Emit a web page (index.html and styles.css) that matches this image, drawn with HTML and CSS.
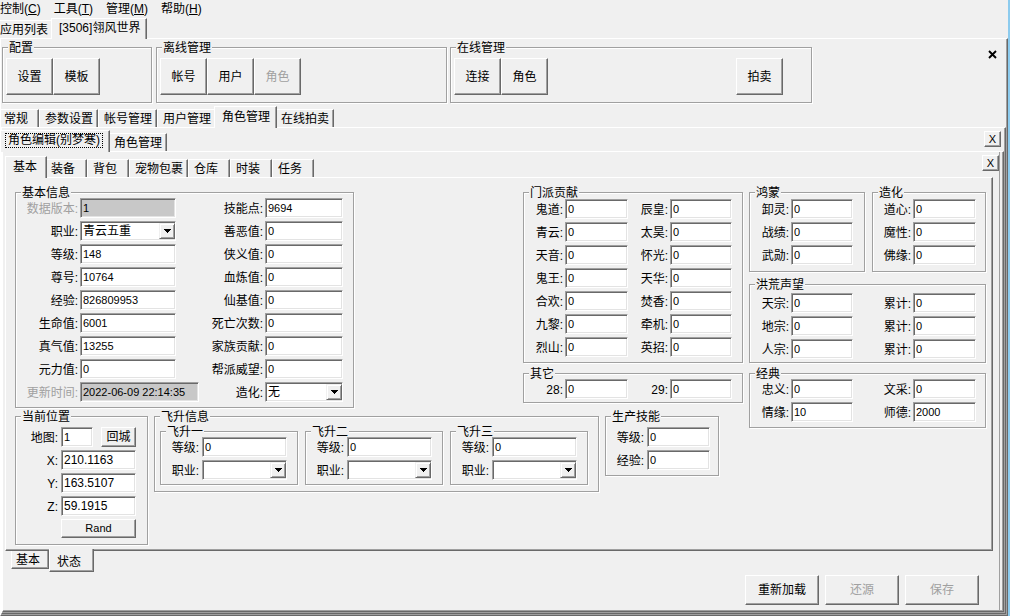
FILE: index.html
```html
<!DOCTYPE html>
<html lang="zh-CN">

<head>
    <meta charset="UTF-8">
    <title>角色编辑</title>
    <link rel="stylesheet" href="styles.css">
</head>

<body>
    <div class="app">
        <div class="menubar">
            <span class="mi">控制(<u>C</u>)</span>
            <span class="mi">工具(<u>T</u>)</span>
            <span class="mi">管理(<u>M</u>)</span>
            <span class="mi">帮助(<u>H</u>)</span>
        </div>

        <div class="tabs tabs-top">
            <div class="tab">应用列表</div>
            <div class="tab on">[3506]翎风世界</div>
        </div>

        <div class="pane pane-1">
            <div class="toolbar">
                <div class="grp tb-cfg">
                    <div class="gt">配置</div>
                    <div class="tb-btns">
                        <button class="btn big">设置</button>
                        <button class="btn big">模板</button>
                    </div>
                </div>
                <div class="grp tb-off">
                    <div class="gt">离线管理</div>
                    <div class="tb-btns">
                        <button class="btn big">帐号</button>
                        <button class="btn big">用户</button>
                        <button class="btn big" disabled>角色</button>
                    </div>
                </div>
                <div class="grp tb-on">
                    <div class="gt">在线管理</div>
                    <div class="tb-btns">
                        <button class="btn big">连接</button>
                        <button class="btn big">角色</button>
                        <button class="btn big auction">拍卖</button>
                    </div>
                </div>
                <span class="close-x">
                    <svg width="9" height="9" viewBox="0 0 9 9"><path d="M1 1L8 8M8 1L1 8" stroke="#000" stroke-width="1.9"/></svg>
                </span>
            </div>

            <div class="tabs tabs-2">
                <div class="tab">常规</div>
                <div class="tab">参数设置</div>
                <div class="tab">帐号管理</div>
                <div class="tab">用户管理</div>
                <div class="tab on">角色管理</div>
                <div class="tab">在线拍卖</div>
            </div>

            <div class="pane pane-2">
                <div class="strip strip-3">
                    <div class="tabs">
                        <div class="tab on"><span class="focus">角色编辑(别梦寒)</span></div>
                        <div class="tab">角色管理</div>
                    </div>
                    <button class="xbtn">X</button>
                </div>

                <div class="pane pane-3">
                    <div class="strip strip-4">
                        <div class="tabs">
                            <div class="tab on">基本</div>
                            <div class="tab">装备</div>
                            <div class="tab">背包</div>
                            <div class="tab">宠物包裹</div>
                            <div class="tab">仓库</div>
                            <div class="tab">时装</div>
                            <div class="tab">任务</div>
                        </div>
                        <button class="xbtn">X</button>
                    </div>

                    <div class="pane pane-4">
                        <div class="row1">
                            <div class="grp g-basic">
                                <div class="gt">基本信息</div>
                                <div class="form f-basic">
                                    <span class="lb dis">数据版本:</span><input class="ed" value="1" disabled>
                                    <span class="lb">技能点:</span><input class="ed" value="9694">

                                    <span class="lb">职业:</span>
                                    <div class="cb"><span>青云五重</span><i class="cb-btn"><svg width="7" height="4" viewBox="0 0 7 4"><path d="M0 0H7V1H6V2H5V3H4V4H3V3H2V2H1V1H0Z"/></svg></i></div>
                                    <span class="lb">善恶值:</span><input class="ed" value="0">

                                    <span class="lb">等级:</span><input class="ed" value="148">
                                    <span class="lb">侠义值:</span><input class="ed" value="0">

                                    <span class="lb">尊号:</span><input class="ed" value="10764">
                                    <span class="lb">血炼值:</span><input class="ed" value="0">

                                    <span class="lb">经验:</span><input class="ed" value="826809953">
                                    <span class="lb">仙基值:</span><input class="ed" value="0">

                                    <span class="lb">生命值:</span><input class="ed" value="6001">
                                    <span class="lb">死亡次数:</span><input class="ed" value="0">

                                    <span class="lb">真气值:</span><input class="ed" value="13255">
                                    <span class="lb">家族贡献:</span><input class="ed" value="0">

                                    <span class="lb">元力值:</span><input class="ed" value="0">
                                    <span class="lb">帮派威望:</span><input class="ed" value="0">

                                    <span class="lb dis">更新时间:</span><input class="ed wide" value="2022-06-09 22:14:35" disabled>
                                    <span class="lb">造化:</span>
                                    <div class="cb"><span>无</span><i class="cb-btn"><svg width="7" height="4" viewBox="0 0 7 4"><path d="M0 0H7V1H6V2H5V3H4V4H3V3H2V2H1V1H0Z"/></svg></i></div>
                                </div>
                            </div>

                            <div class="col-mid">
                                <div class="grp g-sect">
                                    <div class="gt">门派贡献</div>
                                    <div class="form f-sect">
                                        <span class="lb">鬼道:</span><input class="ed" value="0">
                                        <span class="lb">辰皇:</span><input class="ed" value="0">
                                        <span class="lb">青云:</span><input class="ed" value="0">
                                        <span class="lb">太昊:</span><input class="ed" value="0">
                                        <span class="lb">天音:</span><input class="ed" value="0">
                                        <span class="lb">怀光:</span><input class="ed" value="0">
                                        <span class="lb">鬼王:</span><input class="ed" value="0">
                                        <span class="lb">天华:</span><input class="ed" value="0">
                                        <span class="lb">合欢:</span><input class="ed" value="0">
                                        <span class="lb">焚香:</span><input class="ed" value="0">
                                        <span class="lb">九黎:</span><input class="ed" value="0">
                                        <span class="lb">牵机:</span><input class="ed" value="0">
                                        <span class="lb">烈山:</span><input class="ed" value="0">
                                        <span class="lb">英招:</span><input class="ed" value="0">
                                    </div>
                                </div>
                                <div class="grp g-other">
                                    <div class="gt">其它</div>
                                    <div class="form f-sect f-other">
                                        <span class="lb">28:</span><input class="ed" value="0">
                                        <span class="lb">29:</span><input class="ed" value="0">
                                    </div>
                                </div>
                            </div>

                            <div class="col-right">
                                <div class="pair">
                                    <div class="grp g-small">
                                        <div class="gt">鸿蒙</div>
                                        <div class="form f-hm">
                                            <span class="lb">卸灵:</span><input class="ed" value="0">
                                            <span class="lb">战绩:</span><input class="ed" value="0">
                                            <span class="lb">武勋:</span><input class="ed" value="0">
                                        </div>
                                    </div>
                                    <div class="grp g-small g-zh">
                                        <div class="gt">造化</div>
                                        <div class="form f-zh">
                                            <span class="lb">道心:</span><input class="ed" value="0">
                                            <span class="lb">魔性:</span><input class="ed" value="0">
                                            <span class="lb">佛缘:</span><input class="ed" value="0">
                                        </div>
                                    </div>
                                </div>
                                <div class="grp g-fame">
                                    <div class="gt">洪荒声望</div>
                                    <div class="form f-wide f-fame">
                                        <span class="lb">天宗:</span><input class="ed" value="0">
                                        <span class="lb">累计:</span><input class="ed" value="0">
                                        <span class="lb">地宗:</span><input class="ed" value="0">
                                        <span class="lb">累计:</span><input class="ed" value="0">
                                        <span class="lb">人宗:</span><input class="ed" value="0">
                                        <span class="lb">累计:</span><input class="ed" value="0">
                                    </div>
                                </div>
                                <div class="grp g-classic">
                                    <div class="gt">经典</div>
                                    <div class="form f-wide f-classic">
                                        <span class="lb">忠义:</span><input class="ed" value="0">
                                        <span class="lb">文采:</span><input class="ed" value="0">
                                        <span class="lb">情缘:</span><input class="ed" value="10">
                                        <span class="lb">师德:</span><input class="ed" value="2000">
                                    </div>
                                </div>
                            </div>
                        </div>

                        <div class="row2">
                            <div class="grp g-pos">
                                <div class="gt">当前位置</div>
                                <div class="form f-pos">
                                    <span class="lb">地图:</span>
                                    <div class="map-cell"><input class="ed" value="1"><button class="btn back">回城</button></div>
                                    <span class="lb">X:</span><input class="ed num" value="210.1163">
                                    <span class="lb">Y:</span><input class="ed num" value="163.5107">
                                    <span class="lb">Z:</span><input class="ed num" value="59.1915">
                                    <button class="btn rand">Rand</button>
                                </div>
                            </div>

                            <div class="grp g-fly">
                                <div class="gt">飞升信息</div>
                                <div class="fly-row">
                                    <div class="grp g-sub">
                                        <div class="gt">飞升一</div>
                                        <div class="form f-sub">
                                            <span class="lb">等级:</span><input class="ed" value="0">
                                            <span class="lb">职业:</span>
                                            <div class="cb"><span></span><i class="cb-btn"><svg width="7" height="4" viewBox="0 0 7 4"><path d="M0 0H7V1H6V2H5V3H4V4H3V3H2V2H1V1H0Z"/></svg></i></div>
                                        </div>
                                    </div>
                                    <div class="grp g-sub">
                                        <div class="gt">飞升二</div>
                                        <div class="form f-sub">
                                            <span class="lb">等级:</span><input class="ed" value="0">
                                            <span class="lb">职业:</span>
                                            <div class="cb"><span></span><i class="cb-btn"><svg width="7" height="4" viewBox="0 0 7 4"><path d="M0 0H7V1H6V2H5V3H4V4H3V3H2V2H1V1H0Z"/></svg></i></div>
                                        </div>
                                    </div>
                                    <div class="grp g-sub">
                                        <div class="gt">飞升三</div>
                                        <div class="form f-sub">
                                            <span class="lb">等级:</span><input class="ed" value="0">
                                            <span class="lb">职业:</span>
                                            <div class="cb"><span></span><i class="cb-btn"><svg width="7" height="4" viewBox="0 0 7 4"><path d="M0 0H7V1H6V2H5V3H4V4H3V3H2V2H1V1H0Z"/></svg></i></div>
                                        </div>
                                    </div>
                                </div>
                            </div>

                            <div class="grp g-skill">
                                <div class="gt">生产技能</div>
                                <div class="form f-skill">
                                    <span class="lb">等级:</span><input class="ed" value="0">
                                    <span class="lb">经验:</span><input class="ed" value="0">
                                </div>
                            </div>
                        </div>
                    </div>

                    <div class="btabs">
                        <div class="btab">基本</div>
                        <div class="btab on">状态</div>
                    </div>

                    <div class="actions">
                        <button class="btn act">重新加载</button>
                        <button class="btn act" disabled>还源</button>
                        <button class="btn act" disabled>保存</button>
                    </div>
                </div>
            </div>
        </div>
    </div>
</body>

</html>
```

FILE: styles.css
```css
* {
    box-sizing: border-box;
    margin: 0;
    padding: 0;
}

body {
    width: 1010px;
    height: 616px;
    overflow: hidden;
    background-color: #f0f0f0;
    font-family: "Liberation Sans", "Noto Sans CJK SC", sans-serif;
    font-size: 12px;
    color: #000;
}

.app {
    display: flex;
    flex-direction: column;
    width: 1010px;
    height: 616px;
    border-right: 2px solid #8ccbee;
}

/* menu */
.menubar {
    display: flex;
    flex-shrink: 0;
    height: 17px;
    padding-top: 1px;
    line-height: 16px;
}

.mi {
    margin-right: 13px;
    white-space: nowrap;
}

/* tab strips */
.tabs {
    display: flex;
    align-items: flex-end;
    flex-shrink: 0;
    height: 21px;
}

.tab {
    height: 18px;
    min-width: 41px;
    line-height: 16px;
    padding: 1px 4px 0 5px;
    border-top: 1px solid #fff;
    border-left: 1px solid #fff;
    border-right: 1px solid #696969;
    box-shadow: inset -1px 0 #a0a0a0;
    white-space: nowrap;
}

.tab.on {
    position: relative;
    z-index: 1;
    height: 22px;
    margin: 0 -2px -1px;
    padding: 2px 6px 0 7px;
    background-color: #f0f0f0;
}

.tabs-top {
    margin-left: -6px;
}

.tabs-top .tab.on {
    height: 21px;
    padding-top: 1px;
}

.tabs-2 {
    margin-top: 3px;
    margin-left: -3px;
}

.focus {
    display: inline-block;
    height: 15px;
    line-height: 13px;
    margin-left: -3px;
    padding: 0 2px;
    border: 1px dotted #000;
}

.strip {
    display: flex;
    align-items: flex-end;
    flex-shrink: 0;
}

.strip-3 {
    margin-top: 2px;
}

.strip-3 .tab.on {
    padding-top: 1px;
}

.strip-3 .xbtn {
    align-self: flex-start;
    margin: 1px 3px 0 auto;
}

.strip-4 {
    height: 22px;
    margin-top: 3px;
}

.strip-4 .tabs {
    margin-left: 4px;
}

.strip-4 .tab {
    min-width: 42px;
}

.strip-4 .xbtn {
    align-self: flex-start;
    margin: 0 4px 0 auto;
}

/* panes */
.pane {
    border-top: 1px solid #fff;
    border-left: 1px solid #fff;
    border-right: 1px solid #696969;
    border-bottom: 1px solid #696969;
    box-shadow: inset -1px -1px #a0a0a0;
}

.pane-1,
.pane-2,
.pane-3 {
    display: flex;
    flex-direction: column;
    flex: 1;
    min-height: 0;
}

.pane-1,
.pane-2 {
    padding: 0 1px 1px 0;
}

.pane-3 {
    box-shadow: inset -1px -1px #a0a0a0, inset -3px 0 #f0f0f0, inset -4px 0 #a0a0a0;
}

.pane-4 {
    flex-shrink: 0;
    width: 988px;
    height: 374px;
    margin-left: 2px;
}

/* group boxes */
.grp {
    flex-shrink: 0;
    border: 1px solid #a0a0a0;
    box-shadow: inset 1px 1px #fff, 1px 1px #fff;
}

.gt {
    display: table;
    height: 13px;
    margin: -6px 0 -7px 5px;
    padding: 0 1px;
    line-height: 13px;
    background-color: #f0f0f0;
    white-space: nowrap;
}

/* buttons */
.btn,
.xbtn {
    font-family: "Liberation Sans", "Noto Sans CJK SC", sans-serif;
    font-size: 12px;
    color: #000;
    background-color: #f0f0f0;
    border: 1px solid;
    border-color: #fff #696969 #696969 #fff;
    box-shadow: inset -1px -1px #a0a0a0;
    line-height: 1;
}

.btn:disabled {
    color: #a0a0a0;
}

.xbtn {
    width: 17px;
    height: 16px;
    font-size: 11px;
}

/* toolbar */
.toolbar {
    display: flex;
    align-items: flex-start;
    flex-shrink: 0;
    height: 56px;
    margin-top: 8px;
}

.toolbar .grp {
    height: 56px;
}

.tb-cfg {
    width: 150px;
    margin-left: 1px;
}

.tb-off {
    width: 291px;
    margin-left: 4px;
}

.tb-on {
    width: 362px;
    margin-left: 3px;
}

.tb-btns {
    display: flex;
    padding: 10px 0 0 3px;
}

.big {
    width: 47px;
    height: 37px;
}

.auction {
    margin-left: 188px;
}

.close-x {
    display: flex;
    margin: 3px 9px 0 auto;
}

/* form grids */
.form {
    display: grid;
    grid-auto-rows: 20px;
    column-gap: 2px;
    row-gap: 3px;
}

.lb {
    padding-top: 1px;
    line-height: 20px;
    text-align: right;
    white-space: nowrap;
}

.lb.dis {
    color: #a0a0a0;
}

.ed {
    display: block;
    width: 100%;
    height: 20px;
    padding: 0 1px 0 2px;
    font-family: "Liberation Sans", "Noto Sans CJK SC", sans-serif;
    font-size: 11px;
    color: #000;
    background-color: #fff;
    border: 1px solid;
    border-color: #a0a0a0 #fff #fff #a0a0a0;
    box-shadow: inset 1px 1px #696969, inset -1px -1px #e3e3e3;
    outline: none;
}

.ed:disabled {
    background-color: #c8c8c8;
    color: #000;
}

.ed.wide {
    width: 119px;
}

.ed.num {
    font-size: 12px;
}

.cb {
    display: flex;
    align-items: center;
    height: 20px;
    padding-left: 2px;
    background-color: #fff;
    border: 1px solid;
    border-color: #a0a0a0 #fff #fff #a0a0a0;
    box-shadow: inset 1px 1px #696969, inset -1px -1px #e3e3e3;
}

.cb span {
    flex: 1;
    padding-top: 1px;
    line-height: 17px;
}

.cb-btn {
    display: flex;
    align-items: center;
    justify-content: center;
    width: 16px;
    height: 16px;
    background-color: #f0f0f0;
    border: 1px solid;
    border-color: #f0f0f0 #696969 #696969 #f0f0f0;
    box-shadow: inset 1px 1px #fff, inset -1px -1px #a0a0a0;
}

/* page layout */
.row1 {
    display: flex;
    align-items: flex-start;
    height: 224px;
    margin-top: 14px;
}

.row2 {
    display: flex;
    align-items: flex-start;
}

.g-basic {
    width: 339px;
    height: 216px;
    margin-left: 9px;
}

.f-basic {
    grid-template-columns: 62px 96px 85px 78px;
    padding-top: 5px;
}

.col-mid {
    width: 220px;
    margin-left: 169px;
}

.g-sect {
    height: 171px;
}

.f-sect {
    grid-template-columns: 39px 63px 38px 62px;
    padding-top: 6px;
}

.g-other {
    height: 30px;
    margin-top: 10px;
}

.f-other {
    padding-top: 5px;
}

.col-right {
    width: 237px;
    margin-left: 6px;
}

.pair {
    display: flex;
    gap: 7px;
}

.g-small {
    width: 116px;
    height: 80px;
}

.g-zh {
    width: 114px;
}

.f-hm {
    grid-template-columns: 39px 62px;
    padding-top: 6px;
}

.f-zh {
    grid-template-columns: 38px 63px;
    padding-top: 6px;
}

.g-fame {
    height: 79px;
    margin-top: 12px;
}

.g-classic {
    height: 55px;
    margin-top: 10px;
}

.f-wide {
    grid-template-columns: 39px 62px 56px 63px;
}

.f-fame {
    padding-top: 8px;
}

.f-classic {
    padding-top: 5px;
}

.g-pos {
    width: 133px;
    height: 129px;
    margin-left: 9px;
}

.f-pos {
    grid-template-columns: 42px 75px;
    column-gap: 3px;
    padding-top: 10px;
}

.map-cell {
    display: flex;
}

.map-cell .ed {
    width: 32px;
}

.back {
    width: 35px;
    height: 20px;
    margin-left: auto;
}

.rand {
    grid-column: 2;
    height: 19px;
    font-size: 11px;
}

.g-fly {
    width: 445px;
    height: 76px;
    margin-left: 6px;
}

.fly-row {
    display: flex;
    gap: 7px;
    padding: 14px 0 0 5px;
}

.g-sub {
    width: 138px;
    height: 54px;
}

.f-sub {
    grid-template-columns: 38px 85px;
    column-gap: 3px;
    padding-top: 5px;
}

.g-skill {
    width: 114px;
    height: 60px;
    margin-left: 6px;
}

.f-skill {
    grid-template-columns: 38px 63px;
    column-gap: 3px;
    padding-top: 10px;
}

/* bottom tabs */
.btabs {
    display: flex;
    align-items: flex-start;
    flex-shrink: 0;
    height: 21px;
    margin-left: 8px;
}

.btab {
    height: 18px;
    line-height: 16px;
    padding: 1px 8px 0 4px;
    border-left: 1px solid #fff;
    border-right: 1px solid #696969;
    border-bottom: 1px solid #696969;
    box-shadow: inset -1px -1px #a0a0a0;
}

.btab.on {
    position: relative;
    z-index: 1;
    height: 23px;
    margin-top: -2px;
    padding: 5px 12px 0 7px;
    background-color: #f0f0f0;
}

.actions {
    display: flex;
    justify-content: flex-end;
    gap: 6px;
    margin: 3px 24px 0 0;
}

.act {
    width: 74px;
    height: 30px;
}
```
